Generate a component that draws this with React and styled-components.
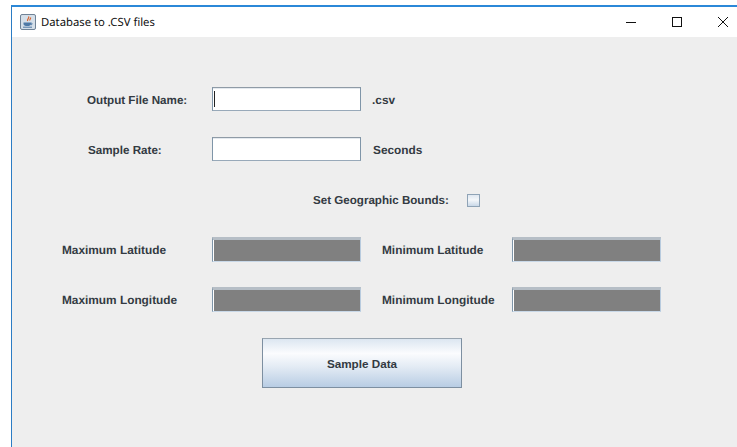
import React from "react";
import styled, { createGlobalStyle } from "styled-components";

const GlobalStyle = createGlobalStyle`
  html, body {
    margin: 0;
    height: 100%;
    background: #ffffff;
    overflow: hidden;
  }
  #root {
    height: 100%;
  }
`;

const Desktop = styled.div`
  width: 737px;
  height: 447px;
  padding: 5px 0 0 11px;
  box-sizing: border-box;
  background: #ffffff;
  overflow: hidden;
`;

const Frame = styled.div`
  height: 442px;
  box-sizing: border-box;
  border-top: 2px solid #2b88d8;
  border-left: 1px solid #2b7cc4;
  display: flex;
  flex-direction: column;
  font-family: "Liberation Sans", Arial, sans-serif;
  text-rendering: geometricPrecision;
`;

const TitleBar = styled.div`
  height: 30px;
  flex: none;
  display: flex;
  align-items: center;
  padding-left: 8px;
  background: #ffffff;
`;

const Title = styled.span`
  margin-left: 5px;
  font-family: "Noto Sans", "Open Sans", sans-serif;
  font-size: 11.3px;
  color: #111111;
`;

const WindowButtons = styled.div`
  margin-left: auto;
  margin-right: -9px;
  display: flex;
  align-items: center;
`;

const WindowButton = styled.div`
  width: 46px;
  height: 30px;
  display: flex;
  align-items: center;
  justify-content: center;
`;

const Content = styled.div`
  flex: 1;
  background: #eeeeee;
  padding: 50px 0 0 50px;
`;

const Row = styled.div`
  display: flex;
  align-items: center;
  height: ${(p) => p.$height || 25}px;
  margin-bottom: ${(p) => p.$after || 25}px;
`;

const Label = styled.label`
  flex: none;
  width: ${(p) => p.$width}px;
  padding-left: ${(p) => p.$indent || 0}px;
  padding-top: ${(p) => (p.$size ? 2 : 0)}px;
  box-sizing: border-box;
  font-size: ${(p) => p.$size || 11.85}px;
  line-height: 14px;
  font-weight: bold;
  color: #333a42;
  white-space: nowrap;
`;

const TextField = styled.div`
  flex: none;
  align-self: flex-start;
  width: 149px;
  height: 24px;
  box-sizing: border-box;
  background: #ffffff;
  border: 1px solid #7f95a8;
  border-top-color: #8f9ba6;
  border-bottom-color: #98a9b9;
  box-shadow: inset 0 1px 0 #e4e9ee;
  padding: 3px 1px;
  display: flex;
`;

const Caret = styled.span`
  width: 1px;
  height: 16px;
  background: #222222;
`;

const Unit = styled.span`
  margin-left: ${(p) => p.$gap || 12}px;
  font-size: 11.85px;
  line-height: 14px;
  font-weight: bold;
  color: #333a42;
`;

const DisabledField = styled.div`
  flex: none;
  width: 149px;
  height: 25px;
  box-sizing: border-box;
  background: #808080;
  border-top: 3px solid #b6bec6;
  border-left: 1px solid #7f95a8;
  border-right: 1px solid #b8cbde;
  border-bottom: 1px solid #c8d8e8;
  box-shadow: inset 1px 0 0 #ffffff;
`;

const CheckBox = styled.span`
  flex: none;
  width: 13px;
  height: 13px;
  box-sizing: border-box;
  margin-left: 18px;
  border: 1px solid #8fa3b6;
  background: linear-gradient(#dfe7f0, #f4f7fa 45%, #c9d8e8);
`;

const ActionRow = styled.div`
  display: flex;
  padding: 1px 0 0 200px;
`;

const ActionButton = styled.button`
  width: 200px;
  height: 50px;
  box-sizing: border-box;
  border: 1px solid #7d8fa1;
  border-top-color: #99a5b0;
  border-radius: 0;
  padding: 0;
  background: linear-gradient(#dce6f1, #fbfcfe 30%, #e3ebf4 58%, #b8cde4);
  font-family: "Liberation Sans", Arial, sans-serif;
  font-size: 11.7px;
  font-weight: bold;
  color: #333a42;
`;

// Small Java coffee cup used as the window icon
const CupIcon = () => (
  <svg width="16" height="16" viewBox="0 0 16 16">
    <rect x="0.5" y="0.5" width="15" height="15" rx="1.5" fill="#d5dfe9" stroke="#6f8296" />
    <path d="M8.5 2.5c1.5 1.5-2 2.5-.8 4.5M10.5 3.5c.6 1-1 1.5-.6 3" fill="none" stroke="#d9622b" strokeWidth="1.2" />
    <path d="M3.5 8.5h7.5v1.5c0 1.500-1.500 2-3.700 2S3.500 11.500 3.500 10z" fill="#4f79a6" />
    <path d="M11 9c1.500 0 1.500 1.500 0 2" fill="none" stroke="#4f79a6" />
    <path d="M3 13.200h9" stroke="#4f79a6" />
  </svg>
);

const MinimizeIcon = () => (
  <svg width="10" height="10" viewBox="0 0 10 10">
    <path d="M0 5.500h10" stroke="#111111" />
  </svg>
);

const MaximizeIcon = () => (
  <svg width="10" height="10" viewBox="0 0 10 10">
    <rect x="0.500" y="0.500" width="9" height="9" fill="none" stroke="#111111" />
  </svg>
);

const CloseIcon = () => (
  <svg width="10" height="10" viewBox="0 0 10 10">
    <path d="M0 0l10 10M10 0L0 10" stroke="#111111" />
  </svg>
);

const boundsRows = [
  ["Maximum Latitude", "Minimum Latitude"],
  ["Maximum Longitude", "Minimum Longitude"],
];

export default function App() {
  return (
    <>
      <GlobalStyle />
      <Desktop>
        <Frame>
          <TitleBar>
            <CupIcon />
            <Title>Database to .CSV files</Title>
            <WindowButtons>
              <WindowButton><MinimizeIcon /></WindowButton>
              <WindowButton><MaximizeIcon /></WindowButton>
              <WindowButton><CloseIcon /></WindowButton>
            </WindowButtons>
          </TitleBar>
          <Content>
            <Row>
              <Label $width={150} $indent={25} $size={11.65}>Output File Name:</Label>
              <TextField><Caret /></TextField>
              <Unit $gap={11}>.csv</Unit>
            </Row>
            <Row $after={31}>
              <Label $width={150} $indent={26} $size={11.65}>Sample Rate:</Label>
              <TextField />
              <Unit>Seconds</Unit>
            </Row>
            <Row $height={14} $after={30}>
              <Label $width={387} $indent={251} $size={11.6}>Set Geographic Bounds:</Label>
              <CheckBox />
            </Row>
            {boundsRows.map(([left, right]) => (
              <Row key={left}>
                <Label $width={150}>{left}</Label>
                <DisabledField />
                <Label $width={151} $indent={21}>{right}</Label>
                <DisabledField />
              </Row>
            ))}
            <ActionRow>
              <ActionButton>Sample Data</ActionButton>
            </ActionRow>
          </Content>
        </Frame>
      </Desktop>
    </>
  );
}
